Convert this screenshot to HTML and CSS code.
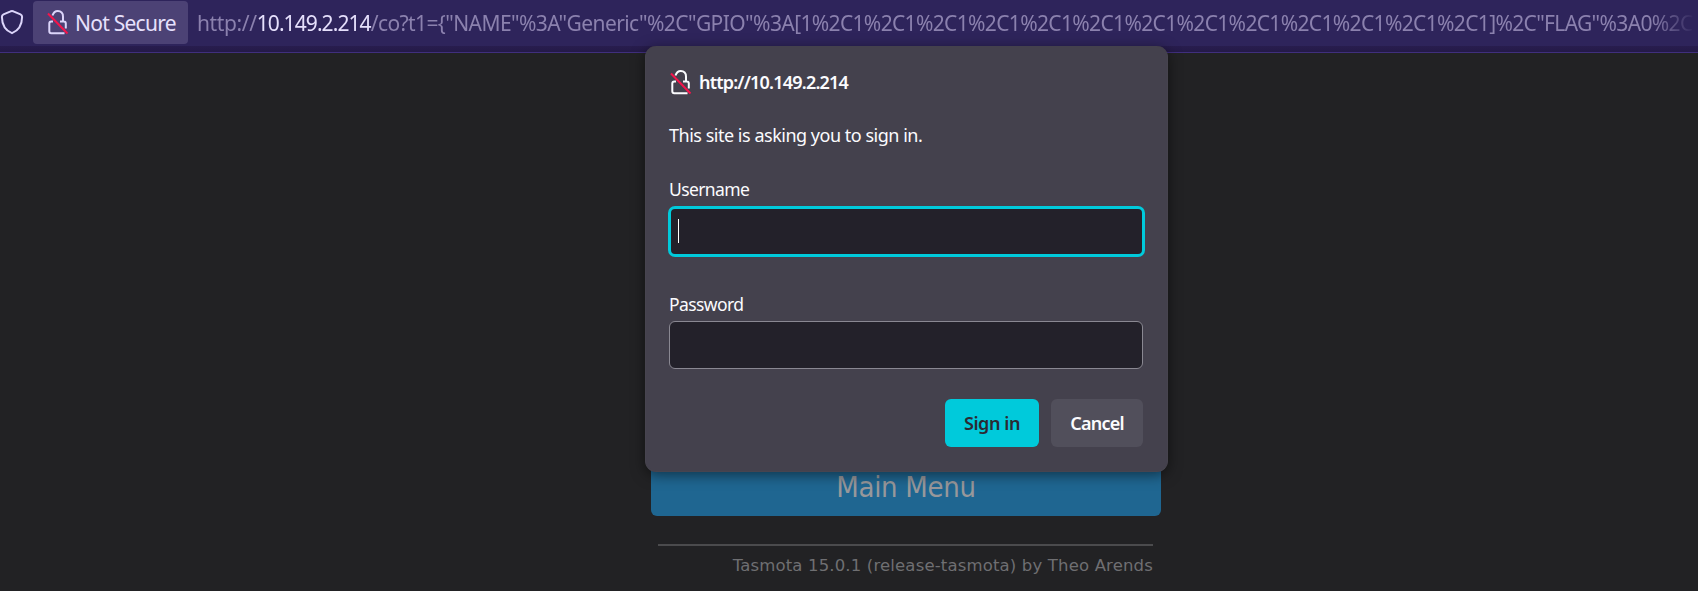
FILE: index.html
```html
<!DOCTYPE html>
<html lang="en">
<head>
<meta charset="utf-8">
<title>Sign in</title>
<link rel="stylesheet" href="styles.css">
</head>
<body>
<header class="toolbar">
  <svg class="shield" viewBox="0 0 24 26" fill="none" stroke="currentColor" stroke-width="2" stroke-linejoin="round"><path d="M12 2 Q13 2 14 2.6 L20.5 5.4 Q22.2 6.2 22.1 8 C22 16 18.5 21.5 12 24.2 C5.5 21.5 2 16 1.9 8 Q1.8 6.2 3.5 5.4 L10 2.6 Q11 2 12 2Z"/></svg>
  <div class="identity">
    <svg class="lock" viewBox="0 0 22 26" fill="none"><path d="M5.5 6.5C6.5 3.3 8.300 2 10.800 2C14 2 16 4.300 16 7.500V12M13 12.500H16.800Q18.800 12.500 18.800 14.500V19.500M6 12.500H4.300Q2.300 12.500 2.300 14.500V22.300Q2.300 24.300 4.300 24.300H17.500" stroke="currentColor" stroke-width="2"/><path d="M1 4.500L20.500 24.500" stroke="#f5144b" stroke-width="2"/></svg>
    <span class="identity-label">Not Secure</span>
  </div>
  <div class="url"><span class="scheme">http://</span><span class="host">10.149.2.214</span><span class="route">/co?t1={"NAME"%3A"Generic"%2C"GPIO"%3A</span><span class="pins">[1%2C1%2C1%2C1%2C1%2C1%2C1%2C1%2C1%2C1%2C1%2C1%2C1%2C1]%2C"FLAG"%3A0%2C</span></div>
</header>
<main class="page">
  <div class="content">
    <button class="menu-button">Main Menu</button>
    <footer class="footer"><span>Tasmota 15.0.1 (release-tasmota) by Theo Arends</span></footer>
  </div>
</main>
<form class="dialog">
  <div class="origin">
    <svg class="lock" viewBox="0 0 22 26" fill="none"><path d="M5.5 6.5C6.5 3.3 8.300 2 10.800 2C14 2 16 4.300 16 7.500V12M13 12.500H16.800Q18.800 12.500 18.800 14.500V19.500M6 12.500H4.300Q2.300 12.500 2.300 14.500V22.300Q2.300 24.300 4.300 24.300H17.500" stroke="currentColor" stroke-width="2"/><path d="M1 4.500L20.500 24.500" stroke="#f5144b" stroke-width="2"/></svg>
    <span class="origin-name">http://10.149.2.214</span>
  </div>
  <p class="message">This site is asking you to sign in.</p>
  <label class="label username">Username</label>
  <div class="field focused"><span class="caret"></span></div>
  <label class="label password">Password</label>
  <div class="field"></div>
  <div class="actions">
    <button type="button" class="action primary"><span>Sign in</span></button>
    <button type="button" class="action cancel"><span>Cancel</span></button>
  </div>
</form>
</body>
</html>
```
FILE: styles.css
```css
* { box-sizing: border-box; }
body {
  margin: 0;
  height: 591px;
  overflow: hidden;
  background: #222224;
  font-family: "Noto Sans", "Open Sans", sans-serif;
}
.toolbar {
  display: flex;
  align-items: flex-start;
  height: 53px;
  overflow: hidden;
  color: #dcd5fa;
  background: linear-gradient(#2e245b 0 46px, #281d4e 46px, #241a48 52px);
  border-bottom: 1px solid #402f7d;
}
.shield { flex: none; width: 24px; height: 26px; margin-top: 9px; }
.identity {
  display: flex;
  flex: none;
  width: 155px;
  height: 43px;
  margin: 1px 9px 0 9px;
  padding-left: 13px;
  border-radius: 4px;
  background: #4c4275;
}
.lock { flex: none; width: 22px; height: 26px; }
.identity .lock { margin-top: 8px; margin-left: 1px; }
.identity-label {
  margin: 7px 0 0 6px;
  font-size: 21px;
  line-height: 30px;
  letter-spacing: -0.75px;
  white-space: nowrap;
  color: #e6e0fc;
}
.url {
  flex: 1;
  overflow: hidden;
  margin: 8px 3px 0 0;
  font-size: 21px;
  line-height: 30px;
  white-space: nowrap;
  color: #8b81ae;
  -webkit-mask-image: linear-gradient(to left, transparent, #000 44px);
  mask-image: linear-gradient(to left, transparent, #000 44px);
}
.scheme { letter-spacing: -0.37px; }
.host { color: #e6e0fc; letter-spacing: -0.92px; }
.route { letter-spacing: -0.59px; }
.pins { letter-spacing: -0.66px; }
.page { display: flex; justify-content: center; padding: 397px 0 0 114px; }
.content { width: 510px; }
.menu-button {
  display: block;
  width: 510px;
  height: 66px;
  padding: 7px 0 0;
  border: 0;
  border-radius: 6px;
  background: #1f6691;
  color: #98989b;
  font: 29px/58px "DejaVu Sans Condensed", "DejaVu Sans", sans-serif;
  font-stretch: condensed;
  letter-spacing: -0.3px;
}
.footer {
  margin: 28px 8px 0 7px;
  padding-top: 9px;
  border-top: 2px solid #4b4b4d;
  color: #6f6f72;
  font: 16.5px/22px "DejaVu Sans", sans-serif;
  letter-spacing: 0.16px;
  text-align: right;
  white-space: nowrap;
}
.dialog {
  position: absolute;
  left: 645px;
  top: 46px;
  width: 523px;
  height: 426px;
  padding: 22px 24px 0 23px;
  border: 1px solid #47444f;
  border-top: 0;
  border-radius: 11px;
  background: #44414d;
  box-shadow: 0 3px 14px rgba(0, 0, 0, 0.5);
  color: #fbfbfe;
  font-size: 18px;
}
.origin { display: flex; height: 30px; padding-left: 1px; }
.origin .lock { margin-top: 1px; }
.origin-name { margin-left: 7px; line-height: 28px; font-weight: 600; letter-spacing: -0.8px; }
.message { margin: 24px 0 0; line-height: 26px; letter-spacing: -0.48px; }
.label { display: block; font-size: 17.5px; line-height: 26px; letter-spacing: -0.6px; }
.username { margin-top: 28px; }
.password { margin-top: 34px; }
.field {
  height: 48px;
  margin-top: 4px;
  border: 1px solid #8a8892;
  border-radius: 6px;
  background: #23212a;
}
.focused {
  height: 51px;
  margin: 4px -2px 0 -1px;
  padding: 10px 7px;
  border: 3px solid #00cadb;
  border-radius: 7px;
}
.caret { display: block; width: 1px; height: 24px; background: #fff; }
.actions { display: flex; justify-content: flex-end; gap: 12px; margin-top: 30px; }
.action {
  height: 48px;
  padding: 0;
  border: 0;
  border-radius: 6px;
  font: 600 18px/48px "Noto Sans", "Open Sans", sans-serif;
  letter-spacing: -0.4px;
}
.primary { width: 94px; background: #00cadb; color: #2b2a33; }
.cancel { width: 92px; background: #514f5b; color: #fbfbfe; letter-spacing: -0.8px; }
```
